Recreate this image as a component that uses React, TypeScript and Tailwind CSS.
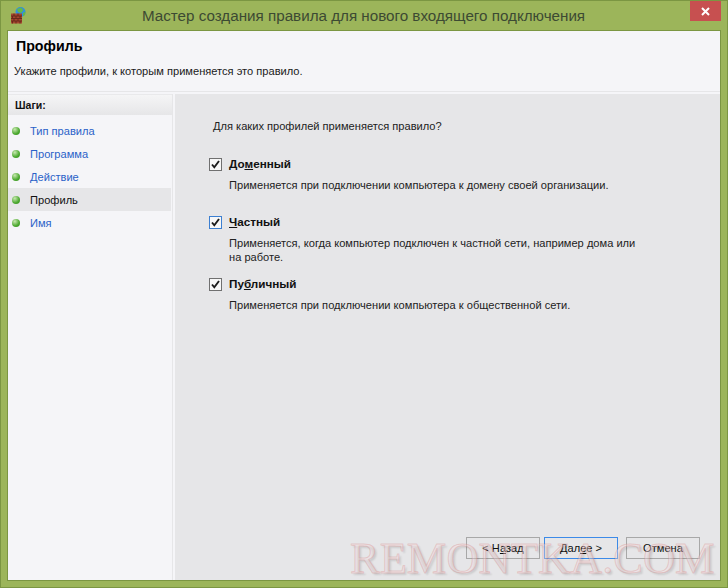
const steps = ["Тип правила", "Программа", "Действие", "Профиль", "Имя"];

function AppIcon() {
  return (
    <svg width="16" height="17" viewBox="0 0 16 17" className="ml-[10px] mt-[6px] shrink-0">
      <circle cx="9.5" cy="5" r="5" fill="#2f8fe0" />
      <path d="M6 2 L10 0.5 L12.5 3 L10 6 L7 5 Z" fill="#62b84a" />
      <path d="M12 6 L14.5 4.5 L14 8 L12 9 Z" fill="#62b84a" />
      <rect x="0" y="6.5" width="11" height="10" fill="#a5452f" />
      <path d="M0 9 H11 M0 11.5 H11 M0 14 H11 M3 6.5 V9 M7 6.5 V9 M1.5 9 V11.5 M5 9 V11.5 M9 9 V11.5 M3 11.5 V14 M7 11.5 V14 M1.5 14 V16.5 M5 14 V16.5 M9 14 V16.5" stroke="#5e2418" strokeWidth="0.8" fill="none" />
    </svg>
  );
}

function Check({ focused }: { focused?: boolean }) {
  return (
    <span
      className={`flex h-[13px] w-[13px] shrink-0 items-center justify-center border bg-[#f7f7f7] ${
        focused ? "border-[#3c7fd1]" : "border-[#707070]"
      }`}
    >
      <svg width="11" height="11" viewBox="0 0 11 11">
        <path d="M2 5.5 L4.3 8.3 L9 2" stroke="#1a1a1a" strokeWidth="1.9" fill="none" />
      </svg>
    </span>
  );
}

function Profile({
  label,
  focused,
  className,
  children,
}: {
  label: React.ReactNode;
  focused?: boolean;
  className: string;
  children: React.ReactNode;
}) {
  return (
    <div className={className}>
      <div className="flex h-[14px] items-center gap-[7px]">
        <Check focused={focused} />
        <span className="text-[11.7px] font-bold text-[#111]">{label}</span>
      </div>
      <p className="ml-[20px] mt-[7px] w-[412px] leading-[14px] text-[#222]">{children}</p>
    </div>
  );
}

function WizardButton({ focused, children }: { focused?: boolean; children: React.ReactNode }) {
  return (
    <button
      className={`h-[22px] w-[74px] border text-center text-[#111] ${
        focused ? "border-[#3c8ae8]" : "border-[#a8a8a8]"
      }`}
    >
      {children}
    </button>
  );
}

export default function App() {
  return (
    <div className="relative flex h-[588px] w-[728px] flex-col overflow-hidden border border-[#7b9642] bg-[#9cb55a] font-['Liberation_Sans',sans-serif] text-[11.1px]">
      <div className="flex h-[29px] shrink-0">
        <AppIcon />
        <div className="flex-1 pl-[10px] pt-[4px] text-center text-[15.2px] leading-[22px] text-[#3c4a33]">
          Мастер создания правила для нового входящего подключения
        </div>
        <div className="mr-[6px] flex h-[20px] w-[31px] items-center justify-center bg-[#c75050]">
          <svg width="9" height="9" viewBox="0 0 9 9">
            <path d="M1 1 L8 8 M8 1 L1 8" stroke="#fff" strokeWidth="2" />
          </svg>
        </div>
      </div>

      <div className="mx-[6px] mb-[6px] flex min-h-0 flex-1 flex-col border border-[#7b9642] bg-[#f5f5f8]">
        <div className="h-[61px] shrink-0 border-b border-[#e6e6e8] pl-[8px]">
          <div className="pt-[7px] text-[14.2px] font-bold leading-[17px] text-black">Профиль</div>
          <div className="-ml-[2px] mt-[9px] leading-[15px] text-[#1a1a1a]">
            Укажите профили, к которым применяется это правило.
          </div>
        </div>

        <div className="mt-[2px] flex min-h-0 flex-1">
          <div className="w-[167px] shrink-0 pr-[2px]">
            <div className="h-full border-r border-[#e6e6e8]">
              <div className="flex h-[21px] items-center border-t border-[#e9e9eb] bg-gradient-to-b from-[#f5f5f6] to-[#e6e6e8] pl-[7px] pt-[2px] text-[10.5px] font-bold text-[#111]">
                Шаги:
              </div>
              <div className="mt-[4px] flex flex-col">
                {steps.map((step) => (
                  <div
                    key={step}
                    className={`flex h-[23px] items-center pl-[4px] ${
                      step === "Профиль" ? "mr-[1px] bg-[#e6e6e8] text-[#111]" : "text-[#2a62c8]"
                    }`}
                  >
                    <span className="h-[8px] w-[8px] rounded-full bg-[radial-gradient(circle_at_35%_30%,#c8e8b0,#4aa82e_60%,#3b8f22)]" />
                    <span className="ml-[10px] mt-[2px]">{step}</span>
                  </div>
                ))}
              </div>
            </div>
          </div>

          <div className="flex min-w-0 flex-1 flex-col bg-[#e6e6e8] pl-[34px]">
            <div className="ml-[4px] mt-[24px] leading-[16px] text-[#222]">
              Для каких профилей применяется правило?
            </div>
            <Profile
              className="mt-[23px]"
              label={
                <>
                  До<u>м</u>енный
                </>
              }
            >
              Применяется при подключении компьютера к домену своей организации.
            </Profile>
            <Profile
              className="mt-[23px]"
              focused
              label={
                <>
                  <u>Ч</u>астный
                </>
              }
            >
              Применяется, когда компьютер подключен к частной сети, например дома или на работе.
            </Profile>
            <Profile
              className="mt-[13px]"
              label={
                <>
                  Пу<u>б</u>личный
                </>
              }
            >
              Применяется при подключении компьютера к общественной сети.
            </Profile>
            <div className="mb-[21px] mr-[20px] mt-auto flex justify-end">
              <WizardButton>
                &lt; Н<u>а</u>зад
              </WizardButton>
              <div className="ml-[4px]">
                <WizardButton focused>
                  Дал<u>е</u>е &gt;
                </WizardButton>
              </div>
              <div className="ml-[8px]">
                <WizardButton>Отмена</WizardButton>
              </div>
            </div>
          </div>
        </div>
      </div>

      <div className="pointer-events-none absolute left-[349px] top-[530px] whitespace-nowrap font-['Liberation_Serif',serif] text-[44.5px] leading-[54px] text-[#fae1e1]/40 [-webkit-text-stroke:1px_rgba(210,120,120,0.3)] [text-shadow:2px_2px_2px_rgba(0,0,0,0.12)]">
        REMONTKA.COM
      </div>
    </div>
  );
}
